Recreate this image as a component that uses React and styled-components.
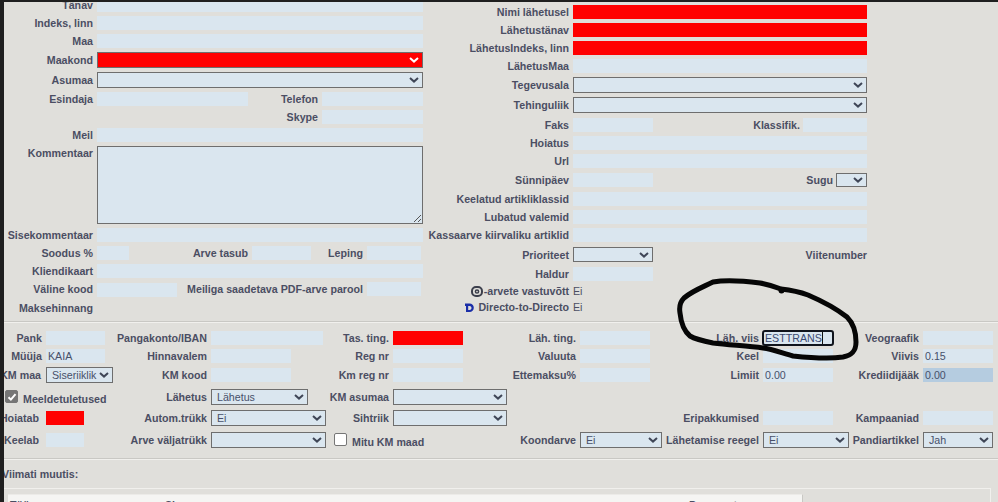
import styled, { createGlobalStyle } from 'styled-components'

const GlobalStyle = createGlobalStyle`
  html, body { margin: 0; padding: 0; background: #e0dfdb; }
  body { font-family: "Liberation Sans", Arial, sans-serif; font-size: 10.67px; }
`

const Page = styled.div`
  position: relative;
  width: 998px;
  height: 502px;
  overflow: hidden;
  background: #e0dfdb;
  display: flex;
  flex-direction: column;
`

const TopBar = styled.div`
  height: 2px;
  flex: none;
  background: #1f1f1f;
`

const Body = styled.div`
  flex: 1;
  min-height: 0;
  display: flex;
`

const LeftBar = styled.div`
  width: 4px;
  flex: none;
  background: #1f1f1f;
`

const Content = styled.div`
  flex: 1;
  min-width: 0;
  overflow: hidden;
`

const TopForm = styled.div`
  height: 319px;
  display: grid;
  grid-template-columns: 419px 444px;
`

const Column = styled.div`
  display: flex;
  flex-direction: column;
  gap: 4px;
  margin-top: ${p => p.$top}px;
`

const Row = styled.div`
  display: flex;
  align-items: ${p => p.$align || 'center'};
  margin-top: ${p => p.$mt || 0}px;
`

const Label = styled.div`
  flex: none;
  width: ${p => (p.$w ? `${p.$w}px` : 'auto')};
  padding-right: ${p => p.$pad ?? 4}px;
  box-sizing: border-box;
  display: flex;
  justify-content: flex-end;
  align-items: center;
  gap: 1px;
  font-weight: bold;
  line-height: 14px;
  white-space: nowrap;
  color: #4b4e63;
  grid-column: ${p => p.$col || 'auto'};
  grid-row: ${p => p.$row || 'auto'};
`

const GrowLabel = styled(Label)`
  flex: 1;
`

const Field = styled.div`
  flex: ${p => (p.$w ? 'none' : 1)};
  width: ${p => (p.$w ? `${p.$w}px` : 'auto')};
  height: 14px;
  margin-top: ${p => p.$drop || 0}px;
  padding-left: 2px;
  box-sizing: border-box;
  line-height: 14px;
  color: #47506a;
  background: ${p => (p.$red ? '#ff0000' : p.$dim ? '#b5cce0' : '#dae6ef')};
`

const FocusField = styled.div`
  width: 70px;
  height: 14px;
  box-sizing: border-box;
  outline: 2px solid #10141c;
  outline-offset: -1px;
  border-radius: 2px;
  padding-left: 2px;
  line-height: 14px;
  color: #3a4a70;
  background: #dae6ef;
`

const Caret = styled.span`
  display: inline-block;
  width: 1px;
  height: 12px;
  vertical-align: -2px;
  background: #111;
`

const SelectBox = styled.div`
  flex: ${p => (p.$w ? 'none' : 1)};
  width: ${p => (p.$w ? `${p.$w}px` : 'auto')};
  height: ${p => p.$h || 16}px;
  margin-top: ${p => p.$lift || 0}px;
  box-sizing: border-box;
  padding: 0 3px 0 5px;
  display: flex;
  align-items: center;
  justify-content: space-between;
  border: 1px solid #6e6e6e;
  color: #47506a;
  background: ${p => (p.$red ? '#ff0000' : '#dae6ef')};
`

const Select = ({ w, h, red, lift, children }) => (
  <SelectBox $w={w} $h={h} $red={red} $lift={lift}>
    <span>{children}</span>
    <svg width="10" height="6" viewBox="0 0 10 6" fill="none">
      <path d="M1 1l4 3.6L9 1" stroke={red ? '#fff' : '#3f4657'} strokeWidth="2" />
    </svg>
  </SelectBox>
)

const TextArea = styled.div`
  flex: 1;
  height: 78px;
  box-sizing: border-box;
  position: relative;
  border: 1px solid #6e6e6e;
  background: #dae6ef;
`

const Grip = styled.svg`
  position: absolute;
  right: 0;
  bottom: 0;
`

const PlainValue = styled.div`
  line-height: 14px;
  color: #4b4e63;
`

const Divider = styled.div`
  height: 2px;
  box-sizing: border-box;
  border-top: 1px solid #c9c8c4;
  border-bottom: 1px solid #f1f0ed;
`

const DetailGrid = styled.div`
  margin: 8px 0 9px;
  display: grid;
  grid-template-columns: 42px 67px 98px 119px 63px 114px 73px 82px 101px 86px 74px 70px;
  grid-template-rows: 18px 19px 22px 21px 22px 16px;
  align-items: start;
`

const Cell = styled.div`
  height: 14px;
  display: flex;
  grid-column: ${p => p.$col || 'auto'};
  grid-row: ${p => p.$row || 'auto'};
`

const CheckCell = styled.div`
  grid-column: ${p => p.$col} / span 2;
  grid-row: ${p => p.$row};
  margin-left: ${p => p.$left}px;
  display: flex;
  align-items: flex-end;
  gap: 5px;
  font-weight: bold;
  line-height: 14px;
  white-space: nowrap;
  color: #4b4e63;
`

const Box = styled.div`
  width: 13px;
  height: 13px;
  margin-bottom: 3px;
  box-sizing: border-box;
  border-radius: 2px;
  display: flex;
  align-items: center;
  justify-content: center;
  border: 1px solid #767676;
  background: ${p => (p.$on ? '#767676' : '#fff')};
`

const Viimati = styled.div`
  height: 28px;
  margin-left: -2px;
  display: flex;
  align-items: center;
  font-weight: bold;
  color: #4b4e63;
`

const Outer = styled.div`
  width: 987px;
  height: 20px;
  box-sizing: border-box;
  padding: 5px 0 0 4px;
  border-top: 1px solid #f1f0ed;
  border-right: 1px solid #f1f0ed;
`

const LogTable = styled.div`
  width: 795px;
  height: 20px;
  box-sizing: border-box;
  padding: 3px 0 0 2px;
  display: grid;
  grid-template-columns: 155px 524px auto;
  border-right: 1px solid #c9c8c4;
  border-top: 1px solid #ecebe8;
  background: #f5f5f3;
  font-weight: bold;
  line-height: 14px;
  color: #4b4e63;
`

const Scribble = styled.svg`
  position: absolute;
  left: 0;
  top: 0;
  pointer-events: none;
`

const AtIcon = () => (
  <svg width="12" height="11" viewBox="0 0 12 11" fill="none" stroke="#3c3f4c">
    <rect x="1" y="1" width="10" height="9" rx="4" strokeWidth="2" />
    <circle cx="6" cy="5.500" r="1.600" strokeWidth="1.500" />
  </svg>
)

const DirectoIcon = () => (
  <svg width="9" height="9" viewBox="0 0 9 9" style={{ marginRight: 3 }}>
    <path d="M0 .5h4.500C7 .5 8.800 2.300 8.800 4.800S7 9 4.500 9H1V3H0zM3.200 3v4h1.300c1.200 0 2-.9 2-2s-.8-2-2-2z" fill="#1b2fa8" fillRule="evenodd" />
  </svg>
)

export default function App() {
  return (
    <Page>
      <GlobalStyle />
      <TopBar />
      <Body>
        <LeftBar />
        <Content>
          <TopForm>
            <Column $top={-4}>
              <Row><Label $w={93}>Tänav</Label><Field /></Row>
              <Row><Label $w={93}>Indeks, linn</Label><Field /></Row>
              <Row><Label $w={93}>Maa</Label><Field /></Row>
              <Row><Label $w={93}>Maakond</Label><Select red /></Row>
              <Row><Label $w={93}>Asumaa</Label><Select /></Row>
              <Row><Label $w={93}>Esindaja</Label><Field $w={151} /><GrowLabel>Telefon</GrowLabel><Field $w={101} /></Row>
              <Row><GrowLabel>Skype</GrowLabel><Field $w={101} /></Row>
              <Row><Label $w={93}>Meil</Label><Field /></Row>
              <Row $align="flex-start"><Label $w={93}>Kommentaar</Label>
                <TextArea>
                  <Grip width="9" height="9" viewBox="0 0 9 9" stroke="#555">
                    <path d="M1 8l7-7M5 8l3-3" />
                  </Grip>
                </TextArea>
              </Row>
              <Row><Label $w={93}>Sisekommentaar</Label><Field /></Row>
              <Row><Label $w={93}>Soodus %</Label><Field $w={32} /><Label $w={123}>Arve tasub</Label><Field $w={59} /><Label $w={56}>Leping</Label><Field $w={54} /></Row>
              <Row><Label $w={93}>Kliendikaart</Label><Field /></Row>
              <Row $align="flex-start"><Label $w={93}>Väline kood</Label><Field $w={80} $drop={1} /><Label $w={190}>Meiliga saadetava PDF-arve parool</Label><Field $w={54} /></Row>
              <Row><Label $w={93}>Maksehinnang</Label></Row>
            </Column>
            <Column $top={3}>
              <Row><Label $w={150}>Nimi lähetusel</Label><Field $red /></Row>
              <Row><Label $w={150}>Lähetustänav</Label><Field $red /></Row>
              <Row><Label $w={150}>LähetusIndeks, linn</Label><Field $red /></Row>
              <Row><Label $w={150}>LähetusMaa</Label><Field /></Row>
              <Row><Label $w={150}>Tegevusala</Label><Select /></Row>
              <Row><Label $w={150}>Tehinguliik</Label><Select /></Row>
              <Row $mt={1}><Label $w={150}>Faks</Label><Field $w={80} /><GrowLabel $pad={3}>Klassifik.</GrowLabel><Field $w={64} /></Row>
              <Row><Label $w={150}>Hoiatus</Label><Field /></Row>
              <Row><Label $w={150}>Url</Label><Field /></Row>
              <Row $mt={1}><Label $w={150}>Sünnipäev</Label><Field $w={80} /><GrowLabel $pad={3}>Sugu</GrowLabel><Select w={31} h={14} /></Row>
              <Row $mt={1}><Label $w={150}>Keelatud artikliklassid</Label><Field /></Row>
              <Row><Label $w={150}>Lubatud valemid</Label><Field /></Row>
              <Row><Label $w={150}>Kassaarve kiirvaliku artiklid</Label><Field /></Row>
              <Row $mt={1}><Label $w={150}>Prioriteet</Label><Select w={80} h={15} /><GrowLabel $pad={0}>Viitenumber</GrowLabel></Row>
              <Row $mt={1}><Label $w={150}>Haldur</Label><Field $w={80} /></Row>
              <Row $mt={-1}><Label $w={150}><AtIcon />-arvete vastuvõtt</Label><PlainValue>Ei</PlainValue></Row>
              <Row $mt={-2}><Label $w={150}><DirectoIcon />Directo-to-Directo</Label><PlainValue>Ei</PlainValue></Row>
            </Column>
          </TopForm>

          <Divider />

          <DetailGrid>
            <Label>Pank</Label><Cell><Field $w={59} /></Cell>
            <Label>Pangakonto/IBAN</Label><Cell><Field $w={112} /></Cell>
            <Label>Tas. ting.</Label><Cell><Field $w={70} $red /></Cell>
            <Label>Läh. ting.</Label><Cell><Field $w={70} /></Cell>
            <Label>Läh. viis</Label><Cell><FocusField>ESTTRANS<Caret /></FocusField></Cell>
            <Label>Veograafik</Label><Cell><Field $w={70} /></Cell>

            <Label>Müüja</Label><Cell><Field $w={59}>KAIA</Field></Cell>
            <Label>Hinnavalem</Label><Cell><Field $w={80} /></Cell>
            <Label>Reg nr</Label><Cell><Field $w={70} /></Cell>
            <Label>Valuuta</Label><Cell><Field $w={70} /></Cell>
            <Label>Keel</Label><Cell><Field $w={70} /></Cell>
            <Label>Viivis</Label><Cell><Field $w={70}>0.15</Field></Cell>

            <Label $pad={5}>KM maa</Label><Cell><Select w={67} lift={-1}>Siseriiklik</Select></Cell>
            <Label>KM kood</Label><Cell><Field $w={80} /></Cell>
            <Label>Km reg nr</Label><Cell><Field $w={70} /></Cell>
            <Label>Ettemaksu%</Label><Cell><Field $w={70} /></Cell>
            <Label>Limiit</Label><Cell><Field $w={70}>0.00</Field></Cell>
            <Label>Krediidijääk</Label><Cell><Field $w={70} $dim>0.00</Field></Cell>

            <CheckCell $col={1} $row={4} $left={1}>
              <Box $on>
                <svg width="10" height="10" viewBox="0 0 10 10" fill="none">
                  <path d="M1.500 5.200l2.400 2.400 4.600-5.400" stroke="#fff" strokeWidth="2" />
                </svg>
              </Box>
              Meeldetuletused
            </CheckCell>
            <Label $col={3} $row={4}>Lähetus</Label>
            <Cell $col={4} $row={4}><Select w={97} lift={-1}>Lähetus</Select></Cell>
            <Label $col={5} $row={4}>KM asumaa</Label>
            <Cell $col={6} $row={4}><Select w={114} lift={-1} /></Cell>

            <Label $col={1} $row={5} $pad={7}>Hoiatab</Label>
            <Cell $col={2} $row={5}><Field $w={38} $red /></Cell>
            <Label $col={3} $row={5}>Autom.trükk</Label>
            <Cell $col={4} $row={5}><Select w={115} lift={-1}>Ei</Select></Cell>
            <Label $col={5} $row={5}>Sihtriik</Label>
            <Cell $col={6} $row={5}><Select w={114} lift={-1} /></Cell>
            <Label $col={9} $row={5}>Eripakkumised</Label>
            <Cell $col={10} $row={5}><Field $w={70} /></Cell>
            <Label $col={11} $row={5}>Kampaaniad</Label>
            <Cell $col={12} $row={5}><Field $w={70} /></Cell>

            <Label $col={1} $row={6} $pad={7}>Keelab</Label>
            <Cell $col={2} $row={6}><Field $w={38} /></Cell>
            <Label $col={3} $row={6}>Arve väljatrükk</Label>
            <Cell $col={4} $row={6}><Select w={115} lift={-1} /></Cell>
            <CheckCell $col={5} $row={6} $left={4}><Box />Mitu KM maad</CheckCell>
            <Label $col={7} $row={6}>Koondarve</Label>
            <Cell $col={8} $row={6}><Select w={82} lift={-1}>Ei</Select></Cell>
            <Label $col={9} $row={6}>Lähetamise reegel</Label>
            <Cell $col={10} $row={6}><Select w={86} lift={-1}>Ei</Select></Cell>
            <Label $col={11} $row={6}>Pandiartikkel</Label>
            <Cell $col={12} $row={6}><Select w={70} lift={-1}>Jah</Select></Cell>
          </DetailGrid>

          <Divider />
          <Viimati>Viimati muutis:</Viimati>
          <Outer>
            <LogTable>
              <span>Tüüp</span>
              <span>Sisu</span>
              <span>Parameeter</span>
            </LogTable>
          </Outer>
        </Content>
      </Body>
      <Scribble width="998" height="502" viewBox="0 0 998 502" fill="none">
        <path
          d="M713 282C728 279 745 281 760 283C770 285 776 287 781 289C790 290 800 292 808 295C822 301 838 310 847 317C853 323 856 331 856 342C856 350 853 355 843 357C830 359 812 358 793 356C782 353 772 349 763 348C748 346 730 345 713 343C703 341 695 339 690 336C684 331 681 323 680 313C679 307 680 302 684 298C692 291 703 287 713 282Z"
          stroke="#060606"
          strokeWidth="5"
          strokeLinejoin="round"
        />
        <circle cx="781.500" cy="290.500" r="3" fill="#060606" />
      </Scribble>
    </Page>
  )
}
